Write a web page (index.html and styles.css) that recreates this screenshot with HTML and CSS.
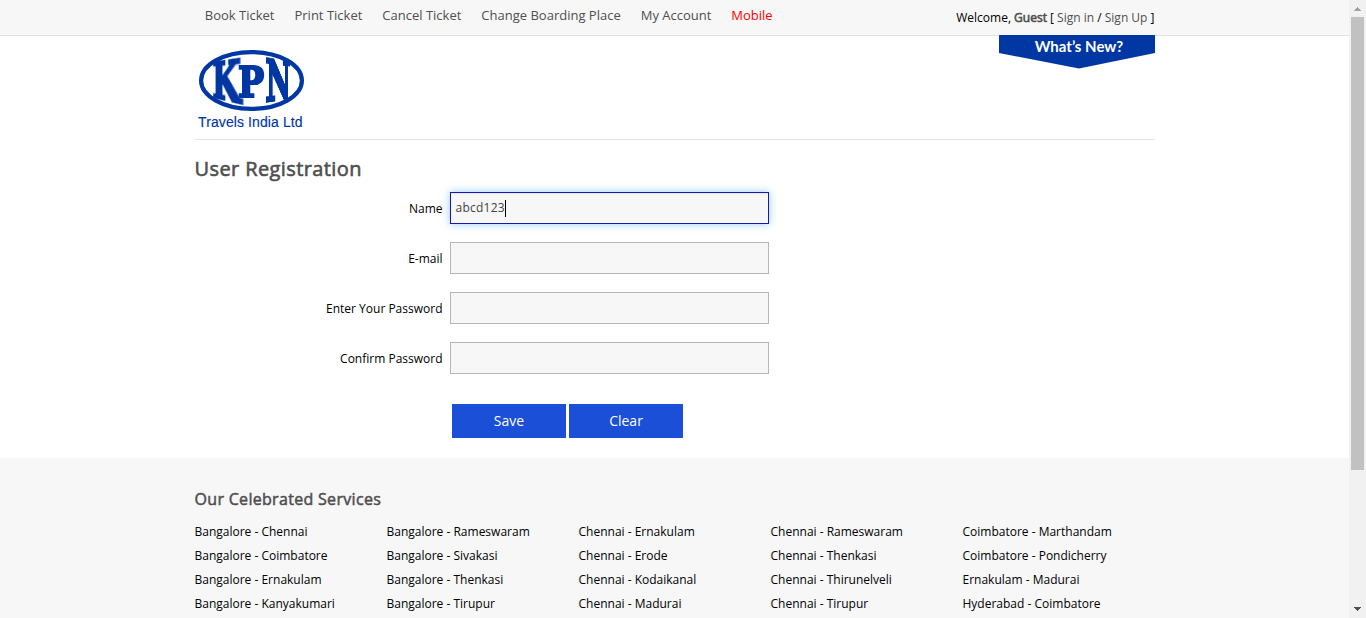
FILE: index.html
```html
<!DOCTYPE html>
<html lang="en">
<head>
<meta charset="utf-8">
<title>User Registration</title>
<link rel="stylesheet" href="styles.css">
</head>
<body>
<div class="page">
  <header class="topbar">
    <div class="container topbar-row">
      <nav class="menu">
        <a>Book Ticket</a><a>Print Ticket</a><a>Cancel Ticket</a><a>Change Boarding Place</a><a>My Account</a><a class="hot">Mobile</a>
      </nav>
      <div class="welcome">Welcome, <b>Guest</b> [ <a>Sign in</a> / <a>Sign Up</a> ]</div>
    </div>
  </header>
  <div class="container brand">
    <div class="logo">
      <svg class="oval" width="105" height="61" viewBox="0 0 105 61"><ellipse cx="52.5" cy="30.5" rx="50.4" ry="28.4" fill="#fff" stroke="#0037a3" stroke-width="4.2"/></svg>
      <span class="letter k">K</span><span class="letter p">P</span><span class="letter n">N</span>
      <div class="tagline">Travels India Ltd</div>
    </div>
    <div class="whats-new">What’s New?</div>
  </div>
  <main class="container">
    <h1>User Registration</h1>
    <form>
      <div class="field"><label>Name</label><div class="input focused">abcd123<i class="caret"></i></div></div>
      <div class="field"><label>E-mail</label><div class="input"></div></div>
      <div class="field"><label>Enter Your Password</label><div class="input"></div></div>
      <div class="field"><label>Confirm Password</label><div class="input"></div></div>
      <div class="actions"><button type="button">Save</button><button type="button">Clear</button></div>
    </form>
  </main>
  <section class="services">
    <div class="container">
      <h2>Our Celebrated Services</h2>
      <div class="routes">
        <a>Bangalore - Chennai</a><a>Bangalore - Rameswaram</a><a>Chennai - Ernakulam</a><a>Chennai - Rameswaram</a><a>Coimbatore - Marthandam</a>
        <a>Bangalore - Coimbatore</a><a>Bangalore - Sivakasi</a><a>Chennai - Erode</a><a>Chennai - Thenkasi</a><a>Coimbatore - Pondicherry</a>
        <a>Bangalore - Ernakulam</a><a>Bangalore - Thenkasi</a><a>Chennai - Kodaikanal</a><a>Chennai - Thirunelveli</a><a>Ernakulam - Madurai</a>
        <a>Bangalore - Kanyakumari</a><a>Bangalore - Tirupur</a><a>Chennai - Madurai</a><a>Chennai - Tirupur</a><a>Hyderabad - Coimbatore</a>
      </div>
    </div>
  </section>
</div>
<aside class="scrollbar">
  <svg width="17" height="17" viewBox="0 0 17 17" shape-rendering="crispEdges"><path d="M8 7h1v1h1v1h1v1h1v1H5v-1h1V9h1V8h1z" fill="#a3a3a3"/></svg>
  <div class="track"><div class="thumb"></div></div>
  <svg width="17" height="17" viewBox="0 0 17 17" shape-rendering="crispEdges"><path d="M5 6h7v1h-1v1h-1v1H9v1H8V9H7V8H6V7H5z" fill="#505050"/></svg>
</aside>
</body>
</html>
```
FILE: styles.css
```css
* { box-sizing: border-box; }
body {
  margin: 0;
  height: 618px;
  overflow: hidden;
  display: flex;
  background: #fff;
  color: #000;
  font: 12px/24px "Open Sans", sans-serif;
}
.page { width: 1349px; height: 618px; overflow: hidden; }
.container { width: 960px; margin: 0 auto; }
.topbar { height: 36px; background: #f7f7f7; border-bottom: 1px solid #e2e2e2; }
.topbar-row { display: flex; justify-content: space-between; }
.menu { display: flex; gap: 20px; padding-left: 10.3px; font-size: 13px; line-height: 31px; color: #4f4f4f; }
.menu .hot { color: #f00; }
.welcome { line-height: 35px; }
.welcome b, .welcome a { color: #4f4f4f; }
.welcome b { font-weight: 400; -webkit-text-stroke: 0.6px #4f4f4f; }
.brand { height: 104px; display: flex; justify-content: space-between; border-bottom: 1px solid #e2e2e2; }
.logo { position: relative; width: 120px; padding: 14px 0 0 4px; }
.oval { display: block; }
.letter {
  position: absolute;
  width: 40px;
  line-height: 40px;
  text-align: center;
  color: #0037a3;
  -webkit-text-stroke: 2px #0037a3;
  font-family: "DejaVu Serif", serif;
  font-weight: bold;
  font-size: 40px;
}
.k { left: 10px; top: 25px; transform: matrix3d(0.8, 0.04, 0, -0.0075, 0, 1.32, 0, 0, 0, 0, 1, 0, 0, 0, 0, 1); }
.p { left: 36px; top: 26px; transform: scale(0.87, 1.08); }
.n { left: 64px; top: 25px; transform: matrix3d(0.68, 0, 0, 0.0055, 0, 1.32, 0, 0, 0, 0, 1, 0, 0, 0, 0, 1); }
.tagline { font: 14px/16px "Liberation Sans", sans-serif; -webkit-text-stroke: 0.15px #0037a3; letter-spacing: 0.1px; color: #0037a3; margin: 3px 0 0 -0.5px; white-space: nowrap; }
.whats-new {
  width: 156px;
  height: 34px;
  margin: -1px -0.5px 0 0;
  background: #0037a3;
  clip-path: polygon(0 0, 100% 0, 100% 18px, 80px 33.5px, 0 18px);
  color: #fff;
  font: bold 15px/23px Lato, sans-serif;
  text-align: center;
  padding-left: 4px;
}
h1 { margin: 16px 0 11px; font-size: 20px; line-height: 25px; font-weight: 400; -webkit-text-stroke: 0.6px #4f4f4f; letter-spacing: 0.4px; color: #4f4f4f; }
.field { display: flex; height: 32px; margin-bottom: 18px; }
.field label { width: 248px; margin-right: 7.5px; text-align: right; line-height: 34px; }
.input { width: 319px; height: 32px; padding: 0 5px; border: 1px solid #b5b5b5; background: #f7f7f7; line-height: 30px; color: #444; display: flex; align-items: center; }
.focused { padding-left: 4.5px; border-color: #1717b8; box-shadow: 0 0 8px rgba(82, 168, 236, .6), inset 0 1px 1px rgba(0, 0, 0, .075); letter-spacing: 0.25px; }
.caret { width: 1px; height: 17px; background: #000; }
.actions { display: flex; gap: 3px; padding: 12px 0 20px 257.5px; }
button { width: 114px; height: 34px; padding: 0; border: 0; background: #1b4fd8; color: #fff; font: 14px/34px "Open Sans", sans-serif; }
.services { height: 160px; padding-top: 30px; background: #f7f7f7; }
h2 { margin: 0 0 9px; font-size: 16px; line-height: 23px; font-weight: 400; -webkit-text-stroke: 0.5px #4f4f4f; letter-spacing: 0.31px; color: #4f4f4f; }
.routes { display: grid; grid-template-columns: repeat(5, 192px); grid-auto-rows: 24px; }
.scrollbar { width: 17px; height: 618px; background: #f1f1f1; display: flex; flex-direction: column; }
.scrollbar svg { display: block; }
.track { flex: 1; }
.thumb { width: 13px; height: 453px; margin: 0 2px; background: #c1c1c1; }
```
